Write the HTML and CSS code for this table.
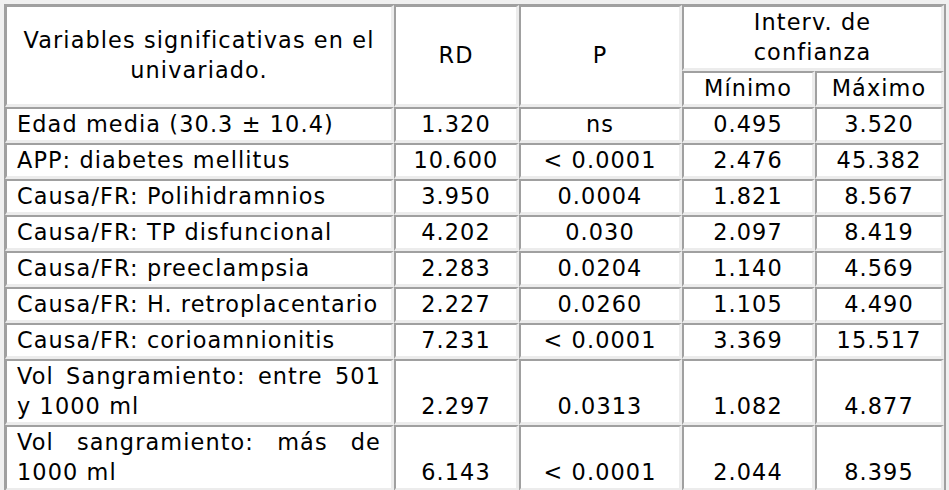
FILE: index.html
```html
<!DOCTYPE html>
<html lang="es">
<head>
<meta charset="utf-8">
<title>Variables significativas</title>
<link rel="stylesheet" href="styles.css">
</head>
<body>
<table class="stats">
  <colgroup>
    <col class="c-var">
    <col class="c-rd">
    <col class="c-p">
    <col class="c-min">
    <col class="c-max">
  </colgroup>
  <thead>
    <tr>
      <th rowspan="2">Variables significativas en el univariado.</th>
      <th rowspan="2">RD</th>
      <th rowspan="2">P</th>
      <th colspan="2">Interv. de confianza</th>
    </tr>
    <tr>
      <th>Mínimo</th>
      <th>Máximo</th>
    </tr>
  </thead>
  <tbody>
    <tr><td class="var">Edad media (30.3 ± 10.4)</td><td>1.320</td><td>ns</td><td>0.495</td><td>3.520</td></tr>
    <tr><td class="var">APP: diabetes mellitus</td><td>10.600</td><td>&lt; 0.0001</td><td>2.476</td><td>45.382</td></tr>
    <tr><td class="var">Causa/FR: Polihidramnios</td><td>3.950</td><td>0.0004</td><td>1.821</td><td>8.567</td></tr>
    <tr><td class="var">Causa/FR: TP disfuncional</td><td>4.202</td><td>0.030</td><td>2.097</td><td>8.419</td></tr>
    <tr><td class="var">Causa/FR: preeclampsia</td><td>2.283</td><td>0.0204</td><td>1.140</td><td>4.569</td></tr>
    <tr><td class="var">Causa/FR: H. retroplacentario</td><td>2.227</td><td>0.0260</td><td>1.105</td><td>4.490</td></tr>
    <tr><td class="var">Causa/FR: corioamnionitis</td><td>7.231</td><td>&lt; 0.0001</td><td>3.369</td><td>15.517</td></tr>
    <tr><td class="var">Vol Sangramiento: entre 501 y 1000 ml</td><td>2.297</td><td>0.0313</td><td>1.082</td><td>4.877</td></tr>
    <tr><td class="var">Vol sangramiento: más de 1000 ml</td><td>6.143</td><td>&lt; 0.0001</td><td>2.044</td><td>8.395</td></tr>
  </tbody>
</table>
</body>
</html>
```
FILE: styles.css
```css
html, body {
  margin: 0;
  padding: 0;
  background: #f0f0f0;
}

body {
  padding: 4px 0 0 4px;
  font-family: "DejaVu Sans", Verdana, sans-serif;
  font-size: 22.4px;
  letter-spacing: 1.1px;
  line-height: 30px;
  color: #000;
}

.stats {
  table-layout: fixed;
  width: 942px;
  border-collapse: separate;
  border-spacing: 0;
  border-style: solid;
  border-color: #a0a0a0;
  border-width: 1px 2px 2px 1px;
  background: #f0f0f0;
}

.c-var { width: 389px; }
.c-rd { width: 125px; }
.c-p { width: 163px; }
.c-min { width: 133px; }
.c-max { width: 129px; }

.stats th,
.stats td {
  box-sizing: border-box;
  background: #fff;
  border-style: solid;
  border-width: 2px 3px 3px 2px;
  border-color: #a0a0a0 #ececec #ececec #a0a0a0;
  padding: 0 10px 1px;
  text-align: center;
  font-weight: normal;
}

.stats th {
  vertical-align: middle;
}

.stats td {
  vertical-align: bottom;
}

.stats td.var {
  text-align: justify;
  vertical-align: top;
}
```
